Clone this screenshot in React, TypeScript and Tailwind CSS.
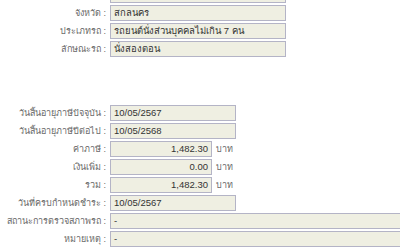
const boxCls =
  'h-[16px] border border-[#b4b4c6] bg-[#efefe2] px-[3px] text-[9.5px] leading-[14px] text-[#333] whitespace-nowrap overflow-hidden'

type Row = {
  label: string
  value: string
  width: string
  right?: boolean
  unit?: string
}

const top: Row[] = [
  { label: '', value: '', width: 'w-[176px]' },
  { label: 'จังหวัด :', value: 'สกลนคร', width: 'w-[176px]' },
  { label: 'ประเภทรถ :', value: 'รถยนต์นั่งส่วนบุคคลไม่เกิน 7 คน', width: 'w-[176px]' },
  { label: 'ลักษณะรถ :', value: 'นั่งสองตอน', width: 'w-[176px]' },
]

const tax: Row[] = [
  { label: 'วันสิ้นอายุภาษีปัจจุบัน :', value: '10/05/2567', width: 'w-[126px]' },
  { label: 'วันสิ้นอายุภาษีปีต่อไป :', value: '10/05/2568', width: 'w-[126px]' },
  { label: 'ค่าภาษี :', value: '1,482.30', width: 'w-[102px]', right: true, unit: 'บาท' },
  { label: 'เงินเพิ่ม :', value: '0.00', width: 'w-[102px]', right: true, unit: 'บาท' },
  { label: 'รวม :', value: '1,482.30', width: 'w-[102px]', right: true, unit: 'บาท' },
  { label: 'วันที่ครบกำหนดชำระ :', value: '10/05/2567', width: 'w-[126px]' },
  { label: 'สถานะการตรวจสภาพรถ :', value: '-', width: 'w-[320px]' },
  { label: 'หมายเหตุ :', value: '-', width: 'w-[320px]' },
]

function FieldRow({ row }: { row: Row }) {
  return (
    <div className="flex h-[18px] items-start">
      <div className="w-[106px] shrink-0 pt-[1px] text-right text-[9px] leading-[14px] text-[#6a6a6a] whitespace-nowrap">
        {row.label}
      </div>
      <div className="ml-[4px] flex shrink-0 items-start">
        <div className={`${boxCls} ${row.width} ${row.right ? 'text-right' : ''}`}>{row.value}</div>
        {row.unit && (
          <span className="ml-[4px] pt-[1px] text-[9px] leading-[14px] text-[#6a6a6a]">{row.unit}</span>
        )}
      </div>
    </div>
  )
}

export default function App() {
  return (
    <div
      className="h-[250px] w-[400px] overflow-hidden bg-white"
      style={{ fontFamily: '"Liberation Sans", Tahoma, "DejaVu Sans", sans-serif' }}
    >
      <div className="-mt-[13px]">
        {top.map((row, i) => (
          <FieldRow key={i} row={row} />
        ))}
      </div>
      <div className="mt-[46px]">
        {tax.map((row) => (
          <FieldRow key={row.label} row={row} />
        ))}
      </div>
    </div>
  )
}
